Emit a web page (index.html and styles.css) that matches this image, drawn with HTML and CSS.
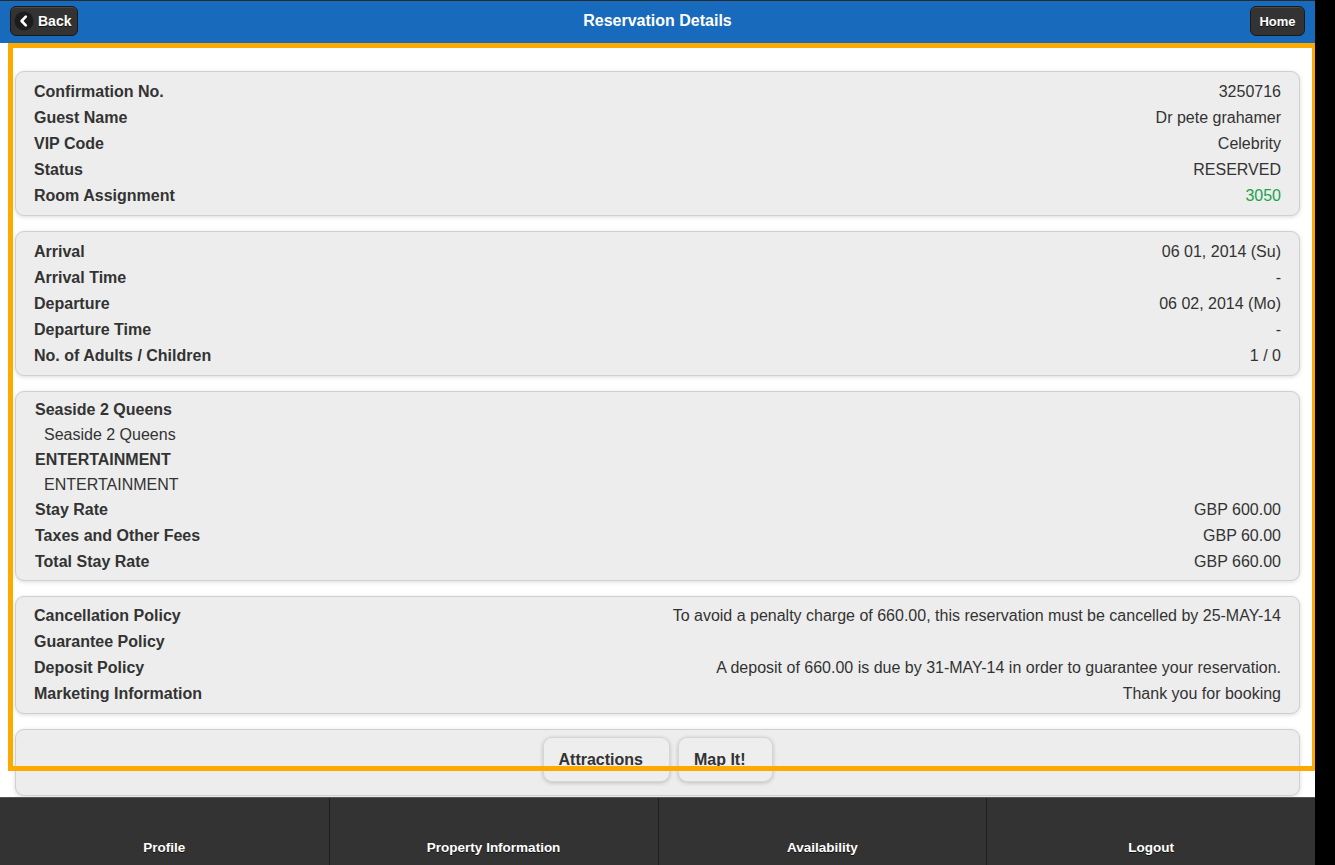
FILE: index.html
```html
<!DOCTYPE html>
<html>
<head>
<meta charset="utf-8">
<title>Reservation Details</title>
<link rel="stylesheet" href="styles.css">
</head>
<body>
<div class="page">
  <header class="header">
    <a class="hbtn back">
      <span class="back-ico"><svg width="20" height="20" viewBox="0 0 20 20"><circle cx="10" cy="10" r="9.5" fill="#1c1c1c"/><path d="M11.8 5.6 L7.6 10 L11.8 14.4" fill="none" stroke="#fff" stroke-width="2.6" stroke-linecap="round" stroke-linejoin="round"/></svg></span>
      <span>Back</span>
    </a>
    <h1 class="title">Reservation Details</h1>
    <a class="hbtn home">Home</a>
  </header>

  <main class="content">
    <section class="card">
      <div class="row"><span class="lbl">Confirmation No.</span><span class="val">3250716</span></div>
      <div class="row"><span class="lbl">Guest Name</span><span class="val">Dr pete grahamer</span></div>
      <div class="row"><span class="lbl">VIP Code</span><span class="val">Celebrity</span></div>
      <div class="row"><span class="lbl">Status</span><span class="val">RESERVED</span></div>
      <div class="row"><span class="lbl">Room Assignment</span><span class="val green">3050</span></div>
    </section>

    <section class="card">
      <div class="row"><span class="lbl">Arrival</span><span class="val">06 01, 2014 (Su)</span></div>
      <div class="row"><span class="lbl">Arrival Time</span><span class="val">-</span></div>
      <div class="row"><span class="lbl">Departure</span><span class="val">06 02, 2014 (Mo)</span></div>
      <div class="row"><span class="lbl">Departure Time</span><span class="val">-</span></div>
      <div class="row"><span class="lbl">No. of Adults / Children</span><span class="val">1 / 0</span></div>
    </section>

    <section class="card card-rate">
      <div class="row"><span class="lbl">Seaside 2 Queens</span></div>
      <div class="row sub"><span class="subtxt">Seaside 2 Queens</span></div>
      <div class="row"><span class="lbl">ENTERTAINMENT</span></div>
      <div class="row sub"><span class="subtxt">ENTERTAINMENT</span></div>
      <div class="row"><span class="lbl">Stay Rate</span><span class="val">GBP 600.00</span></div>
      <div class="row"><span class="lbl">Taxes and Other Fees</span><span class="val">GBP 60.00</span></div>
      <div class="row"><span class="lbl">Total Stay Rate</span><span class="val">GBP 660.00</span></div>
    </section>

    <section class="card card-policy">
      <div class="row"><span class="lbl">Cancellation Policy</span><span class="val">To avoid a penalty charge of 660.00, this reservation must be cancelled by 25-MAY-14</span></div>
      <div class="row"><span class="lbl">Guarantee Policy</span><span class="val"></span></div>
      <div class="row"><span class="lbl">Deposit Policy</span><span class="val">A deposit of 660.00 is due by 31-MAY-14 in order to guarantee your reservation.</span></div>
      <div class="row"><span class="lbl">Marketing Information</span><span class="val">Thank you for booking</span></div>
    </section>

    <section class="card card-actions">
      <a class="abtn">Attractions</a>
      <a class="abtn">Map It!</a>
    </section>
  </main>

  <nav class="footer">
    <a class="fitem">Profile</a>
    <a class="fitem">Property Information</a>
    <a class="fitem">Availability</a>
    <a class="fitem">Logout</a>
  </nav>

  <div class="highlight"></div>
</div>
</body>
</html>
```
FILE: styles.css
```css
html {
  background: #000;
}
body {
  margin: 0;
  font-family: "Liberation Sans", Arial, sans-serif;
  color: #333;
}
.page {
  position: relative;
  width: 1315px;
  height: 865px;
  overflow: hidden;
  background: #fff;
}
.header {
  height: 42px;
  border-top: 1px solid #2a2a2a;
  background: #176abc;
  display: flex;
  align-items: center;
  justify-content: space-between;
  padding: 0 10px;
  position: relative;
}
.title {
  position: absolute;
  left: 0;
  right: 0;
  top: 0;
  margin: 0;
  text-align: center;
  font-size: 16px;
  font-weight: bold;
  line-height: 40px;
  color: #fff;
  pointer-events: none;
}
.hbtn {
  height: 30px;
  box-sizing: border-box;
  margin-top: -2px;
  display: flex;
  align-items: center;
  border: 1px solid #1a1a1a;
  border-radius: 6px;
  background: #333;
  box-shadow: inset 0 1px 0 rgba(255,255,255,0.12);
  color: #fff;
  font-size: 14px;
  font-weight: bold;
  text-shadow: 0 1px 0 #111;
}
.back {
  width: 68px;
  padding-left: 3px;
  gap: 4px;
}
.back-ico {
  display: flex;
}
.home {
  width: 55px;
  justify-content: center;
  font-size: 13px;
}
.content {
  padding: 28px 15px 0;
  height: 726px;
}
.card {
  background: #ededed;
  border: 1px solid #d0d0d0;
  border-radius: 9px;
  box-shadow: 0 1px 4px rgba(0,0,0,0.15);
  padding: 7px 18px 6px;
  margin-bottom: 15px;
}
.card-rate {
  padding: 5px 18px 5px 19px;
}
.card-policy {
  padding: 6px 18px 6px;
}
.row {
  display: flex;
  justify-content: space-between;
  align-items: center;
  height: 26px;
  font-size: 16px;
}
.row.sub {
  height: 24px;
}
.lbl {
  font-weight: bold;
  color: #333;
}
.val {
  color: #333;
}
.subtxt {
  padding-left: 9px;
  color: #333;
}
.green {
  color: #22a14c;
}
.card-actions {
  display: flex;
  justify-content: center;
  gap: 8px;
  padding: 7px 18px 13px;
  margin-bottom: 0;
  height: 45px;
}
.abtn {
  height: 45px;
  box-sizing: border-box;
  display: flex;
  align-items: center;
  padding: 0 26px 0 15px;
  background: #eeeeee;
  border: 1px solid #d6d6d6;
  border-radius: 9px;
  box-shadow: 0 1px 4px rgba(0,0,0,0.2);
  font-size: 16px;
  font-weight: bold;
  color: #333;
}
.footer {
  display: grid;
  grid-template-columns: repeat(4, 1fr);
  height: 67px;
  background: #333;
  border-top: 1px solid #555;
}
.fitem {
  display: flex;
  justify-content: center;
  align-items: flex-end;
  padding-bottom: 10px;
  color: #fff;
  font-size: 13.5px;
  font-weight: bold;
  text-shadow: 0 1px 0 #111;
  border-left: 1px solid #1e1e1e;
}
.fitem:first-child {
  border-left: none;
}
.highlight {
  position: absolute;
  left: 8px;
  top: 43px;
  width: 1309px;
  height: 728px;
  box-sizing: border-box;
  border: 5px solid #fcaa00;
  pointer-events: none;
}
```
